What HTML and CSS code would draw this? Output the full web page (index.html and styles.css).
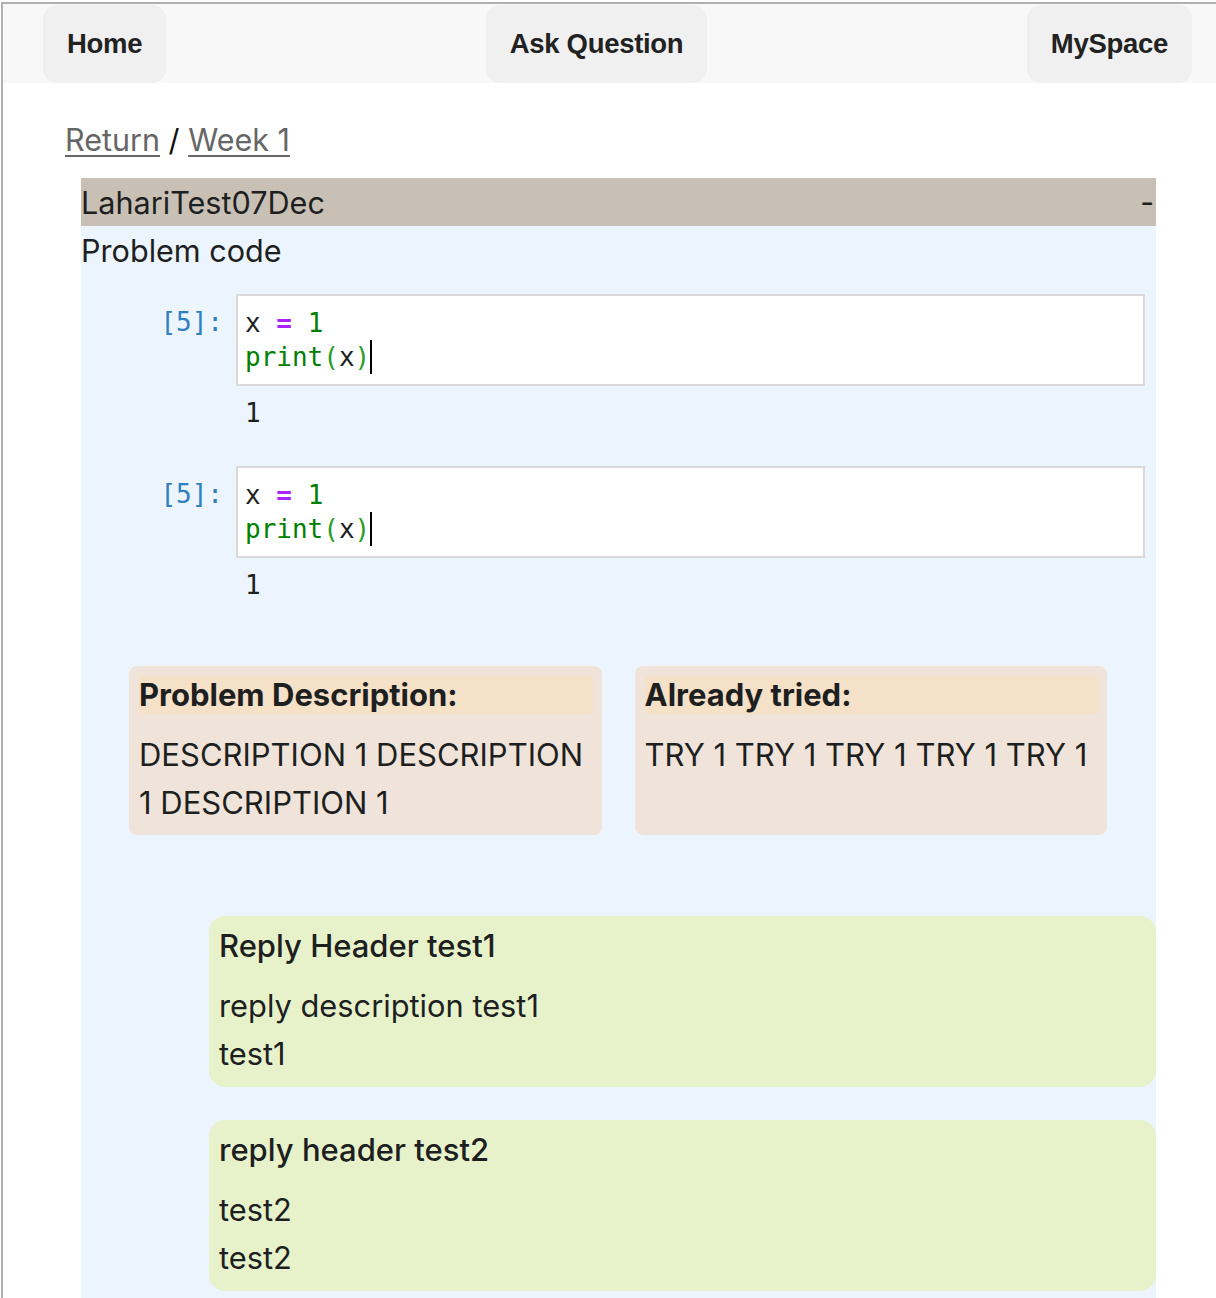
FILE: index.html
```html
<!DOCTYPE html>
<html>
<head>
<meta charset="utf-8">
<link rel="stylesheet" href="styles.css">
</head>
<body>
<div class="frame">
  <nav class="nav">
    <a class="nav-btn">Home</a>
    <a class="nav-btn">Ask Question</a>
    <a class="nav-btn">MySpace</a>
  </nav>
  <div class="crumbs"><a class="crumb">Return</a> / <a class="crumb">Week 1</a></div>
  <section class="card">
    <div class="card-head"><span>LahariTest07Dec</span><span class="collapse">-</span></div>
    <div class="card-body">
      <div class="label">Problem code</div>
      <div class="cell">
        <div class="prompt">[5]:</div>
        <div class="cell-main">
          <div class="input"><span class="v">x</span> <span class="op">=</span> <span class="num">1</span><br><span class="bi">print</span><span class="par">(</span><span class="v">x</span><span class="par">)</span><span class="cursor"></span></div>
          <div class="output">1</div>
        </div>
      </div>
      <div class="cell">
        <div class="prompt">[5]:</div>
        <div class="cell-main">
          <div class="input"><span class="v">x</span> <span class="op">=</span> <span class="num">1</span><br><span class="bi">print</span><span class="par">(</span><span class="v">x</span><span class="par">)</span><span class="cursor"></span></div>
          <div class="output">1</div>
        </div>
      </div>
      <div class="info-row">
        <div class="info">
          <div class="info-head">Problem Description:</div>
          <div class="info-text">DESCRIPTION 1 DESCRIPTION 1 DESCRIPTION 1</div>
        </div>
        <div class="info">
          <div class="info-head">Already tried:</div>
          <div class="info-text">TRY 1 TRY 1 TRY 1 TRY 1 TRY 1</div>
        </div>
      </div>
      <div class="replies">
        <div class="reply">
          <div class="reply-head">Reply Header test1</div>
          <div class="reply-text">reply description test1<br>test1</div>
        </div>
        <div class="reply">
          <div class="reply-head">reply header test2</div>
          <div class="reply-text">test2<br>test2</div>
        </div>
      </div>
    </div>
  </section>
</div>
</body>
</html>
```

FILE: styles.css
```css
html, body {
  margin: 0;
  padding: 0;
  background: #ffffff;
}
body {
  padding: 2px 0 0 1px;
  font-family: Inter, "Noto Sans", sans-serif;
  color: #1d1f21;
}
.frame {
  border-top: 2px solid #b0b0b0;
  border-left: 2px solid #b0b0b0;
  min-height: 1294px;
}
.nav {
  display: flex;
  justify-content: space-between;
  align-items: stretch;
  background: #f8f8f8;
  padding: 1px 24px 0 40px;
  height: 78px;
}
.nav-btn {
  display: flex;
  align-items: center;
  padding: 0 24px;
  background: #f0f0f0;
  border-radius: 14px;
  font-family: "Liberation Sans", Arial, sans-serif;
  font-weight: 700;
  font-size: 27.5px;
  color: #222;
  letter-spacing: -0.3px;
}
.crumbs {
  margin: 37px 0 0 62px;
  font-size: 30.5px;
  line-height: 40px;
  color: #111;
}
.crumb {
  color: #666;
  text-decoration: underline;
  text-underline-offset: 4px;
  text-decoration-thickness: 2px;
}
.card {
  margin: 18px 60px 0 78px;
}
.card-head {
  display: flex;
  justify-content: space-between;
  align-items: center;
  background: #c9c0b5;
  height: 48px;
  font-size: 30.6px;
}
.collapse {
  padding-right: 2px;
  font-size: 30px;
}
.card-body {
  background: #ecf4fe;
  padding-bottom: 30px;
}
.label {
  font-size: 30.6px;
  line-height: 50px;
  margin-bottom: 18px;
}
.cell {
  display: flex;
  margin-bottom: 36px;
}
.prompt {
  width: 142px;
  flex: none;
  text-align: right;
  padding-right: 13px;
  padding-top: 11px;
  font-family: "DejaVu Sans Mono", monospace;
  font-size: 26px;
  line-height: 34px;
  color: #307fc1;
}
.cell-main {
  flex: 1;
  margin-right: 11px;
}
.input {
  background: #fff;
  border: 2px solid #d9d9d9;
  padding: 10px 8px 10px 7px;
  font-family: "DejaVu Sans Mono", monospace;
  font-size: 26px;
  line-height: 34px;
  color: #1d1f21;
}
.op { color: #aa22ff; font-weight: bold; }
.num { color: #008000; }
.bi { color: #008000; }
.par { color: #2a9d2a; }
.cursor {
  display: inline-block;
  width: 2px;
  height: 34px;
  background: #000;
  vertical-align: top;
}
.output {
  padding: 10px 10px 0 9px;
  font-family: "DejaVu Sans Mono", monospace;
  font-size: 26px;
  line-height: 34px;
}
.info-row {
  display: flex;
  gap: 33px;
  padding: 28px 49px 0 48px;
}
.info {
  flex: 1;
  background: #f0e4da;
  border-radius: 8px;
  padding: 10px 9px 8px 10px;
}
.info-head {
  background: #f5e0c8;
  font-weight: 700;
  font-size: 31px;
  line-height: 38px;
}
.info-text {
  margin-top: 17px;
  font-size: 31px;
  line-height: 48px;
}
.replies {
  padding: 81px 0 0 128px;
  display: flex;
  flex-direction: column;
  gap: 33px;
}
.reply {
  background: #e7f2cb;
  border-radius: 16px;
  padding: 10px 10px 9px 10px;
}
.reply-head {
  font-weight: 500;
  font-size: 31px;
  line-height: 40px;
  margin-bottom: 16px;
}
.reply-text {
  font-size: 30.8px;
  line-height: 48px;
}
```
